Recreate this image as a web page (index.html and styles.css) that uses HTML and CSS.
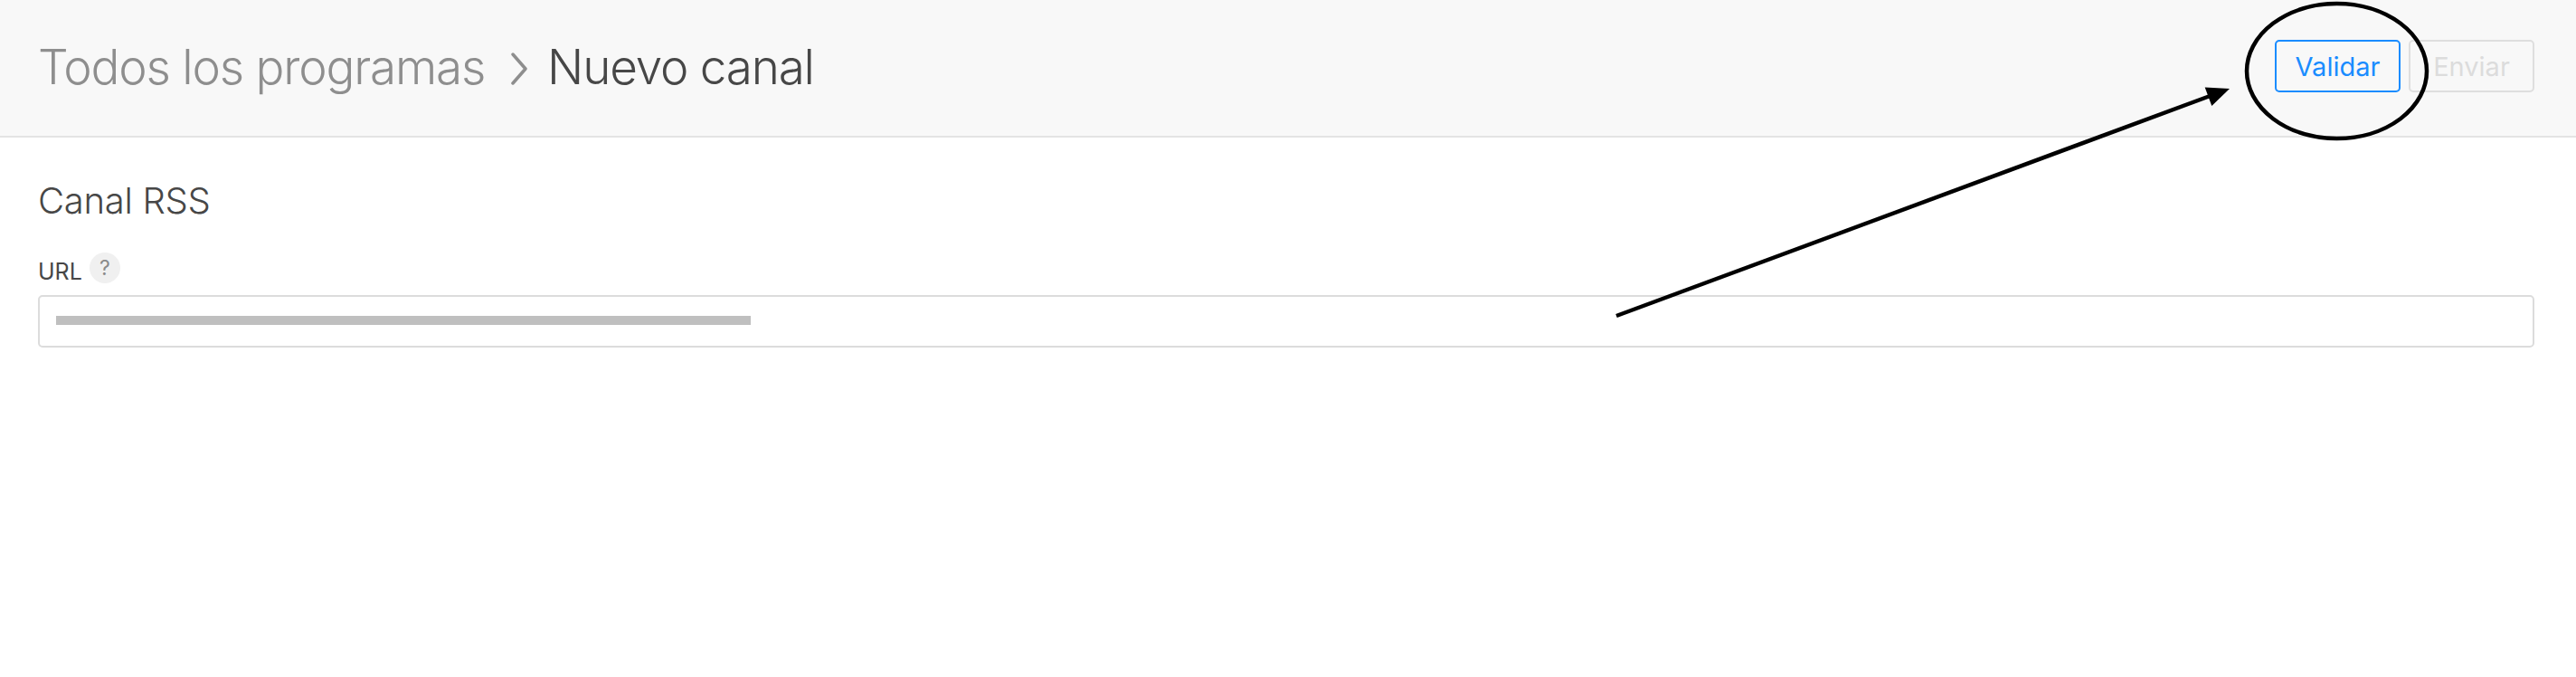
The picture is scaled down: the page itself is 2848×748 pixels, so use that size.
FILE: index.html
```html
<!DOCTYPE html>
<html lang="es">
<head>
<meta charset="utf-8">
<title>Nuevo canal</title>
<link rel="stylesheet" href="styles.css">
</head>
<body>
<header class="topbar">
  <nav class="crumbs">
    <span class="crumb-parent">Todos los programas</span>
    <svg class="chev" width="18" height="36" viewBox="0 0 18 36"><polyline points="2,2 16,18 2,34" fill="none" stroke="#8e8e8e" stroke-width="3.5" stroke-linecap="round" stroke-linejoin="round"/></svg>
    <span class="crumb-current">Nuevo canal</span>
  </nav>
  <div class="actions">
    <button class="btn btn-primary">Validar</button>
    <button class="btn btn-disabled" disabled>Enviar</button>
  </div>
</header>
<main class="content">
  <h2 class="section-title">Canal RSS</h2>
  <div class="field-label">
    <span class="label-text">URL</span>
    <span class="help">?</span>
  </div>
  <div class="input">
    <div class="redacted"></div>
  </div>
</main>
<svg class="annot" width="2848" height="748" viewBox="0 0 2848 748">
  <ellipse cx="2583.5" cy="78.5" rx="99.5" ry="74.5" fill="none" stroke="#000" stroke-width="4.5"/>
  <line x1="1787" y1="349" x2="2442" y2="106.5" stroke="#000" stroke-width="4.5"/>
  <polygon points="2465,98 2437.7,96.4 2445.3,117" fill="#000"/>
</svg>
</body>
</html>
```
FILE: styles.css
```css
html, body {
  margin: 0;
  padding: 0;
  background: #ffffff;
}
body {
  position: relative;
  width: 2848px;
  height: 748px;
  overflow: hidden;
  font-family: "Inter", "Liberation Sans", sans-serif;
}
.topbar {
  height: 150px;
  background: #f8f8f8;
  border-bottom: 2px solid #e4e4e4;
  display: flex;
  align-items: center;
  justify-content: space-between;
  padding: 0 46px 0 42px;
}
.crumbs {
  display: flex;
  align-items: center;
  font-size: 53px;
  font-weight: 300;
  line-height: 64px;
  letter-spacing: -1.2px;
  margin-top: -2px;
}
.crumb-parent {
  color: #8e8e8e;
}
.chev {
  margin: 4px 22px 0 29px;
}
.crumb-current {
  color: #474747;
}
.actions {
  display: flex;
  gap: 9px;
  margin-top: -4px;
}
.btn {
  box-sizing: border-box;
  width: 139px;
  height: 58px;
  border-radius: 5px;
  background: transparent;
  font-family: "Inter", "Liberation Sans", sans-serif;
  font-size: 29px;
  font-weight: 400;
  padding: 0;
}
.btn-primary {
  border: 2px solid #1a8cff;
  color: #1a8cff;
}
.btn-disabled {
  border: 2px solid #dedede;
  color: #dcdcdc;
}
.content {
  padding: 46px 46px 0 42px;
}
.section-title {
  margin: 0;
  font-size: 40px;
  font-weight: 300;
  line-height: 48px;
  letter-spacing: -0.3px;
  color: #474747;
}
.field-label {
  display: flex;
  align-items: flex-start;
  margin-top: 33px;
  gap: 8px;
}
.label-text {
  padding-top: 4px;
  font-size: 25px;
  line-height: 34px;
  color: #474747;
}
.help {
  width: 34px;
  height: 34px;
  border-radius: 50%;
  background: #f0f0f0;
  color: #8a8a8a;
  font-size: 23px;
  line-height: 34px;
  text-align: center;
}
.input {
  box-sizing: border-box;
  margin-top: 9px;
  height: 58px;
  border: 2px solid #dcdcdc;
  border-radius: 5px;
  background: #fff;
  padding: 21px 18px 0;
}
.redacted {
  width: 768px;
  height: 10px;
  background: #bfbfbf;
}
.annot {
  position: absolute;
  left: 0;
  top: 0;
  pointer-events: none;
}
```
